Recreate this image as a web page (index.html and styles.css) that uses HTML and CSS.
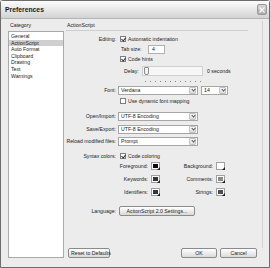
FILE: index.html
```html
<!DOCTYPE html>
<html lang="en">
<head>
    <meta charset="UTF-8">
    <title>Preferences</title>
    <link rel="stylesheet" href="styles.css">
</head>
<body>
    <div class="window">
        <div class="titlebar">
            <span class="title">Preferences</span>
            <span class="close">
                <svg width="6" height="6" viewBox="0 0 6 6"><path d="M0.5 0.5L5.5 5.5M5.5 0.5L0.5 5.5" stroke="#fff" stroke-width="1.3"/></svg>
            </span>
        </div>

        <div class="content">
            <div class="sidebar">
                <div class="caption">Category</div>
                <ul class="list">
                    <li>General</li>
                    <li class="selected">ActionScript</li>
                    <li>Auto Format</li>
                    <li>Clipboard</li>
                    <li>Drawing</li>
                    <li>Text</li>
                    <li>Warnings</li>
                </ul>
            </div>

            <div class="main">
                <div class="panel">
                    <div class="heading">ActionScript</div>

                    <div class="row first">
                        <span class="label">Editing:</span>
                        <span class="check on"></span>
                        <span>Automatic indentation</span>
                    </div>
                    <div class="row">
                        <span class="label"></span>
                        <span class="tab-label">Tab size:</span>
                        <span class="input">4</span>
                    </div>
                    <div class="row">
                        <span class="label"></span>
                        <span class="check on"></span>
                        <span>Code hints</span>
                    </div>
                    <div class="row delay">
                        <span class="label"></span>
                        <span class="delay-label">Delay:</span>
                        <div class="slider">
                            <div class="track"><span class="thumb"></span></div>
                            <div class="ticks">
                                <i></i><i></i><i></i><i></i><i></i><i></i><i></i><i></i><i></i><i></i><i></i><i></i>
                            </div>
                        </div>
                        <span class="seconds">0 seconds</span>
                    </div>
                    <div class="row font">
                        <span class="label">Font:</span>
                        <div class="select wide"><span>Verdana</span><b class="arrow"></b></div>
                        <div class="select small"><span>14</span><b class="arrow"></b></div>
                    </div>
                    <div class="row tight">
                        <span class="label"></span>
                        <span class="check"></span>
                        <span>Use dynamic font mapping</span>
                    </div>
                    <div class="row gap5">
                        <span class="label">Open/Import:</span>
                        <div class="select wide"><span>UTF-8 Encoding</span><b class="arrow"></b></div>
                    </div>
                    <div class="row gap3">
                        <span class="label">Save/Export:</span>
                        <div class="select wide"><span>UTF-8 Encoding</span><b class="arrow"></b></div>
                    </div>
                    <div class="row gap2">
                        <span class="label">Reload modified files:</span>
                        <div class="select wide"><span>Prompt</span><b class="arrow"></b></div>
                    </div>
                    <div class="row gap5">
                        <span class="label">Syntax colors:</span>
                        <span class="check on"></span>
                        <span>Code coloring</span>
                    </div>

                    <div class="colors">
                        <span class="clabel">Foreground:</span>
                        <span class="swatch" style="background:#0a0a0a"></span>
                        <span class="clabel">Background:</span>
                        <span class="swatch" style="background:#ffffff"></span>
                        <span class="clabel">Keywords:</span>
                        <span class="swatch" style="background:#30353d"></span>
                        <span class="clabel">Comments:</span>
                        <span class="swatch" style="background:#8a8a8a"></span>
                        <span class="clabel">Identifiers:</span>
                        <span class="swatch" style="background:#33373d"></span>
                        <span class="clabel">Strings:</span>
                        <span class="swatch" style="background:#4d4f52"></span>
                    </div>

                    <div class="row language">
                        <span class="label">Language:</span>
                        <button class="btn settings">ActionScript 2.0 Settings...</button>
                    </div>
                </div>

                <div class="footer">
                    <button class="btn reset">Reset to Defaults</button>
                    <button class="btn ok">OK</button>
                    <button class="btn cancel">Cancel</button>
                </div>
            </div>
        </div>
    </div>
</body>
</html>
```

FILE: styles.css
```css
* {
    box-sizing: border-box;
}

body {
    margin: 0;
    background-color: #d4d4d4;
    font-family: "Liberation Sans", Arial, sans-serif;
    font-size: 5.2px;
    color: #222;
}

.window {
    width: 270px;
    height: 268px;
    border: 1px solid #6c6c6c;
    border-radius: 3px 3px 0 0;
    background-color: #ececec;
    display: flex;
    flex-direction: column;
}

.titlebar {
    height: 18px;
    display: flex;
    align-items: center;
    justify-content: space-between;
    padding: 0 2px 0 4px;
    background: linear-gradient(#fbfbfb, #e6e6e6 55%, #d3d3d3);
    border-bottom: 1px solid #b5b5b5;
}

.title {
    font-weight: bold;
    font-size: 6.8px;
    color: #1a1a1a;
}

.close {
    width: 10px;
    height: 11px;
    border: 1px solid #9a9a9a;
    border-radius: 2px;
    background: linear-gradient(#d6d6d6, #a9a9a9);
    display: flex;
    align-items: center;
    justify-content: center;
}

.content {
    flex: 1;
    display: flex;
    gap: 2px;
    padding: 2px 6px 9px 7px;
}

.sidebar {
    width: 56px;
    display: flex;
    flex-direction: column;
}

.caption {
    height: 10px;
    line-height: 8px;
    padding-left: 2px;
}

.list {
    flex: 1;
    margin: 0;
    padding: 1px 0 0;
    list-style: none;
    background-color: #fff;
    border: 1px solid #a9a9a9;
}

.list li {
    height: 6.6px;
    line-height: 6.6px;
    padding-left: 2px;
}

.list li.selected {
    background-color: #cfcfcf;
}

.main {
    flex: 1;
    display: flex;
    flex-direction: column;
}

.panel {
    flex: 1;
    border-right: 1px solid #d2d2d2;
}

.heading {
    height: 10px;
    line-height: 8px;
    padding-left: 1px;
    margin-right: 14px;
    border-bottom: 1px solid #cdcdcd;
}

.row {
    display: flex;
    align-items: center;
    height: 10px;
    white-space: nowrap;
}

.row.first {
    margin-top: 3px;
}

.row.font,
.row.tight {
    margin-top: 1px;
}

.row.gap5 {
    margin-top: 5px;
}

.row.gap3 {
    margin-top: 3px;
}

.row.gap2 {
    margin-top: 2px;
}

.label {
    width: 52px;
    flex: none;
    text-align: right;
    padding-right: 2px;
    overflow: visible;
}

.check {
    width: 6px;
    height: 6px;
    margin: 0 2px 0 2px;
    border: 1px solid #7f7f7f;
    background-color: #fff;
    position: relative;
}

.check.on::after {
    content: "";
    position: absolute;
    left: 1px;
    top: 0;
    width: 2px;
    height: 3px;
    border: solid #333;
    border-width: 0 1px 1px 0;
    transform: rotate(40deg);
}

.tab-label {
    margin-left: 3px;
    width: 27px;
}

.input {
    width: 17px;
    height: 9px;
    line-height: 7px;
    padding-left: 3px;
    background-color: #fff;
    border: 1px solid #b0b0b0;
}

.row.delay {
    height: 20px;
    align-items: flex-start;
}

.delay-label {
    margin-left: 6px;
    width: 18px;
    line-height: 14px;
}

.slider {
    width: 61px;
}

.track {
    height: 10px;
    margin-top: 2px;
    border: 1px solid #d0d0d0;
    background-color: #f6f6f6;
    position: relative;
}

.thumb {
    position: absolute;
    left: 1px;
    top: 0;
    width: 5px;
    height: 8px;
    border: 1px solid #8c8c8c;
    border-radius: 1px 1px 2px 2px;
    background-color: #f2f2f2;
}

.ticks {
    display: flex;
    justify-content: space-between;
    padding: 0 2px 0 3px;
    margin-top: 5px;
}

.ticks i {
    width: 1px;
    height: 1px;
    background-color: #8a8a8a;
}

.seconds {
    margin-left: 4px;
    line-height: 14px;
}

.select {
    height: 9px;
    display: flex;
    align-items: center;
    justify-content: space-between;
    border: 1px solid #a6a6a6;
    background-color: #fff;
    padding: 0 1px 0 2px;
}

.select.wide {
    width: 80px;
}

.select.small {
    width: 27px;
    margin-left: 3px;
}

.arrow {
    width: 7px;
    height: 7px;
    border: 1px solid #c3c3c3;
    border-radius: 1px;
    background: linear-gradient(#f7f7f7, #dcdcdc);
    position: relative;
}

.arrow::after {
    content: "";
    position: absolute;
    left: 1.5px;
    top: 0.5px;
    width: 2px;
    height: 2px;
    border: solid #555;
    border-width: 0 1px 1px 0;
    transform: rotate(45deg);
}

.colors {
    display: grid;
    grid-template-columns: 82px 9px 50px 9px;
    grid-auto-rows: 10px;
    column-gap: 3px;
    row-gap: 3px;
    align-items: center;
}

.clabel {
    text-align: right;
}

.swatch {
    width: 9px;
    height: 8px;
    border: 1px solid #a0a0a0;
    outline: 1px solid #fff;
    outline-offset: -2px;
    position: relative;
}

.swatch::after {
    content: "";
    position: absolute;
    right: -1px;
    bottom: -1px;
    border-style: solid;
    border-width: 0 0 3px 3px;
    border-color: transparent transparent #222 transparent;
}

.row.language {
    margin-top: 9px;
}

.btn {
    font-family: "Liberation Sans", Arial, sans-serif;
    font-size: 5.2px;
    color: #222;
    height: 10px;
    padding: 0 2px;
    border: 1px solid #8b8b8b;
    border-radius: 2px;
    background: linear-gradient(#ffffff, #e9e9e9 60%, #d9d9d9);
    line-height: 8px;
    white-space: nowrap;
}

.settings {
    width: 76px;
    margin-left: 1px;
}

.footer {
    height: 10px;
    display: flex;
    gap: 3px;
}

.reset {
    width: 42px;
    margin-left: 2px;
}

.ok {
    width: 36px;
    margin-left: auto;
}

.cancel {
    width: 37px;
    margin-right: 6px;
}
```
